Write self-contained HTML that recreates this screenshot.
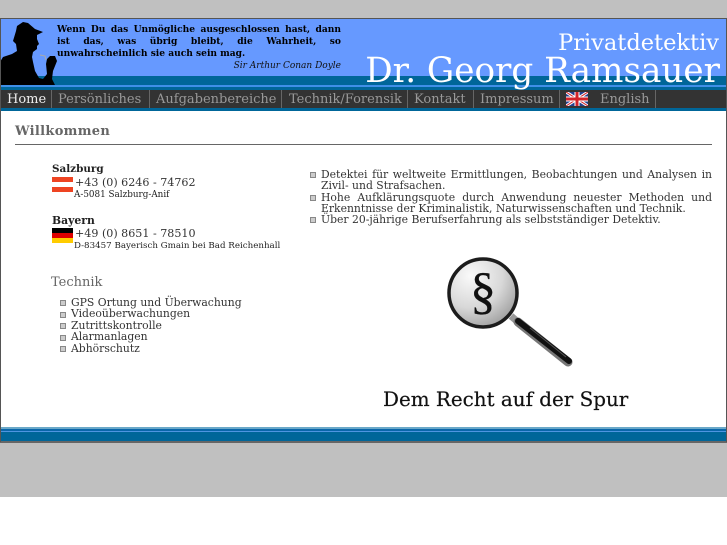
<!DOCTYPE html>
<html><head><meta charset="utf-8"><style>
html,body{margin:0;padding:0;background:#fff}
body{width:727px;height:545px;position:relative;overflow:hidden;font-family:"DejaVu Serif","Liberation Serif",serif}
.a{position:absolute}
.t{position:absolute;white-space:nowrap}
.nav{position:absolute;top:91px;height:17px;line-height:17px;font-size:13px;color:#999;letter-spacing:0;box-sizing:border-box;padding-left:7px;white-space:nowrap}
.s{position:absolute;top:90px;width:1px;height:18px;background:#666}
.b{position:absolute;width:4px;height:4px;background:#ccc;border:1px solid #888}
.l{font-size:10.8px;color:#333;white-space:nowrap;position:absolute;line-height:12px}
.j{position:absolute;font-size:10.8px;color:#333;line-height:11.5px;text-align:justify;text-align-last:justify;white-space:nowrap}
</style></head><body>
<div class="a" style="left:0;top:0;width:727px;height:497px;background:#c0c0c0"></div>
<div class="a" style="left:0;top:18px;width:727px;height:424px;background:#fff"></div>
<div class="a" style="left:0;top:19px;width:727px;height:57px;background:#6699ff"></div>
<div class="a" style="left:0;top:76px;width:727px;height:9px;background:#006699"></div>
<div class="a" style="left:0;top:85px;width:727px;height:2px;background:#3f8fe8"></div>
<div class="a" style="left:0;top:87px;width:727px;height:3px;background:#006699"></div>
<div class="a" style="left:0;top:90px;width:727px;height:18px;background:#333"></div>
<div class="a" style="left:0;top:108px;width:727px;height:3px;background:#006699"></div>

<svg class="a" style="left:0;top:0" width="60" height="86" viewBox="0 0 60 86">
<path fill="#000" d="M17 26 L23 22 L28 23 L35 29 L43 32 L37 35 L37 39 L39 44 L37 46 L37 49 L33 52 L32 57 L33 62 L35 71 L39 78 L43 79 L47 74 L46 64 L47 59 L50 56 L55 56 L57 61 L53 71 L52 79 L55 85 L0 85 L0 62 L3 57 L12 54 L17 51 L16 44 L13 41 L16 31 Z"/>
<path fill="none" stroke="#aaa" stroke-width="1" d="M40 55 L45 56 L46 60"/>
</svg>

<div class="t" style="left:57px;top:24px;width:284px;font-size:9.1px;font-weight:bold;line-height:12px;color:#000">
<div style="text-align:justify;text-align-last:justify">Wenn Du das Unmögliche ausgeschlossen hast, dann</div>
<div style="text-align:justify;text-align-last:justify">ist das, was übrig bleibt, die Wahrheit, so</div>
<div>unwahrscheinlich sie auch sein mag.</div>
<div style="text-align:right;font-weight:normal;font-style:italic;font-size:9px;color:#111">Sir Arthur Conan Doyle</div>
</div>

<div class="t" style="right:8px;top:28px;font-size:22.5px;line-height:30px;color:#fff">Privatdetektiv</div>
<div class="t" style="right:7px;top:49px;font-size:34.2px;line-height:44px;color:#fff">Dr. Georg Ramsauer</div>

<div class="nav" style="left:0;color:#eee">Home</div><div class="s" style="left:51px"></div>
<div class="nav" style="left:51px">Persönliches</div><div class="s" style="left:149px"></div>
<div class="nav" style="left:149px">Aufgabenbereiche</div><div class="s" style="left:281px"></div>
<div class="nav" style="left:282px">Technik/Forensik</div><div class="s" style="left:407px"></div>
<div class="nav" style="left:407px">Kontakt</div><div class="s" style="left:473px"></div>
<div class="nav" style="left:473px">Impressum</div><div class="s" style="left:559px"></div>
<svg class="a" style="left:566px;top:92px" width="22" height="14" viewBox="0 0 22 14">
<rect width="22" height="14" fill="#24408e"/>
<path d="M0 0L22 14M22 0L0 14" stroke="#fff" stroke-width="3"/>
<path d="M0 0L22 14M22 0L0 14" stroke="#d2232a" stroke-width="1"/>
<path d="M11 0V14M0 7H22" stroke="#fff" stroke-width="5"/>
<path d="M11 0V14M0 7H22" stroke="#d2232a" stroke-width="3"/>
</svg>
<div class="nav" style="left:593px">English</div><div class="s" style="left:655px"></div>

<div class="t" style="left:15px;top:124px;font-size:13px;font-weight:bold;color:#666;line-height:16px;letter-spacing:.3px">Willkommen</div>
<div class="a" style="left:15px;top:144px;width:697px;height:1px;background:#666"></div>

<div class="t" style="left:52px;top:163px;font-size:10.4px;font-weight:bold;color:#222;line-height:13px">Salzburg</div>
<div class="a" style="left:52px;top:176px;width:21px;height:16px;background:#fff"></div>
<div class="a" style="left:52px;top:177px;width:21px;height:5px;background:#ee4422"></div>
<div class="a" style="left:52px;top:187px;width:21px;height:5px;background:#ee4422"></div>
<div class="t" style="left:75px;top:176px;font-size:11.1px;color:#333;line-height:14px">+43 (0) 6246 - 74762</div>
<div class="t" style="left:74px;top:189px;font-size:8.8px;color:#222;line-height:12px">A-5081 Salzburg-Anif</div>

<div class="t" style="left:52px;top:214px;font-size:10.8px;font-weight:bold;color:#222;line-height:13px">Bayern</div>
<div class="a" style="left:52px;top:228px;width:21px;height:5px;background:#000"></div>
<div class="a" style="left:52px;top:233px;width:21px;height:5px;background:#dd0000"></div>
<div class="a" style="left:52px;top:238px;width:21px;height:5px;background:#ffcc00"></div>
<div class="t" style="left:75px;top:227px;font-size:11.1px;color:#333;line-height:14px">+49 (0) 8651 - 78510</div>
<div class="t" style="left:74px;top:240px;font-size:8.7px;color:#222;line-height:12px">D-83457 Bayerisch Gmain bei Bad Reichenhall</div>

<div class="t" style="left:51px;top:276px;font-size:13px;color:#666;line-height:14px">Technik</div>
<div class="b" style="left:60px;top:300px"></div><div class="l" style="left:71px;top:297px">GPS Ortung und Überwachung</div>
<div class="b" style="left:60px;top:312px"></div><div class="l" style="left:71px;top:308px">Videoüberwachungen</div>
<div class="b" style="left:60px;top:323px"></div><div class="l" style="left:71px;top:320px">Zutrittskontrolle</div>
<div class="b" style="left:60px;top:335px"></div><div class="l" style="left:71px;top:331px">Alarmanlagen</div>
<div class="b" style="left:60px;top:346px"></div><div class="l" style="left:71px;top:343px">Abhörschutz</div>

<div class="b" style="left:310px;top:172px"></div>
<div class="j" style="left:321px;top:169px;width:391px">Detektei für weltweite Ermittlungen, Beobachtungen und Analysen in</div>
<div class="l" style="left:321px;top:180px">Zivil- und Strafsachen.</div>
<div class="b" style="left:310px;top:195px"></div>
<div class="j" style="left:321px;top:192px;width:391px">Hohe Aufklärungsquote durch Anwendung neuester Methoden und</div>
<div class="l" style="left:321px;top:203px">Erkenntnisse der Kriminalistik, Naturwissenschaften und Technik.</div>
<div class="b" style="left:310px;top:217px"></div>
<div class="l" style="left:321px;top:214px">Über 20-jährige Berufserfahrung als selbstständiger Detektiv.</div>

<svg class="a" style="left:440px;top:250px" width="140" height="125" viewBox="0 0 140 125">
<defs>
<radialGradient id="g" cx=".32" cy=".25" r=".85"><stop offset="0" stop-color="#fafafa"/><stop offset=".55" stop-color="#d8d8d8"/><stop offset="1" stop-color="#999"/></radialGradient>
</defs>
<path d="M71 66 L79 73" stroke="#999" stroke-width="7"/>
<path d="M78 72 L128 112" stroke="#777" stroke-width="9" stroke-linecap="round"/>
<path d="M78 71 L129 111" stroke="#111" stroke-width="6" stroke-linecap="round"/>
<path d="M90 78 L126 107" stroke="#555" stroke-width="1"/>
<circle cx="43" cy="43" r="34" fill="url(#g)" stroke="#1c1c1c" stroke-width="3.5"/>
<text x="43" y="58" font-size="52" text-anchor="middle" fill="#111" stroke="#111" stroke-width=".3" font-family="'Liberation Serif',serif">§</text>
</svg>

<div class="t" style="left:383px;top:388px;font-size:19.9px;line-height:24px;color:#111;-webkit-text-stroke:.2px #111">Dem Recht auf der Spur</div>

<div class="a" style="left:0;top:427px;width:727px;height:2px;background:#6aa8c8"></div>
<div class="a" style="left:0;top:429px;width:727px;height:2px;background:#0a66aa"></div>
<div class="a" style="left:0;top:431px;width:727px;height:1px;background:#4f95e0"></div>
<div class="a" style="left:0;top:432px;width:727px;height:9px;background:#006699"></div>
<div class="a" style="left:0;top:441px;width:727px;height:2px;background:#666"></div>

<div class="a" style="left:0;top:18px;width:727px;height:1px;background:#555"></div>
<div class="a" style="left:0;top:18px;width:1px;height:424px;background:#555"></div>
<div class="a" style="left:726px;top:18px;width:1px;height:424px;background:#555"></div>
</body></html>
